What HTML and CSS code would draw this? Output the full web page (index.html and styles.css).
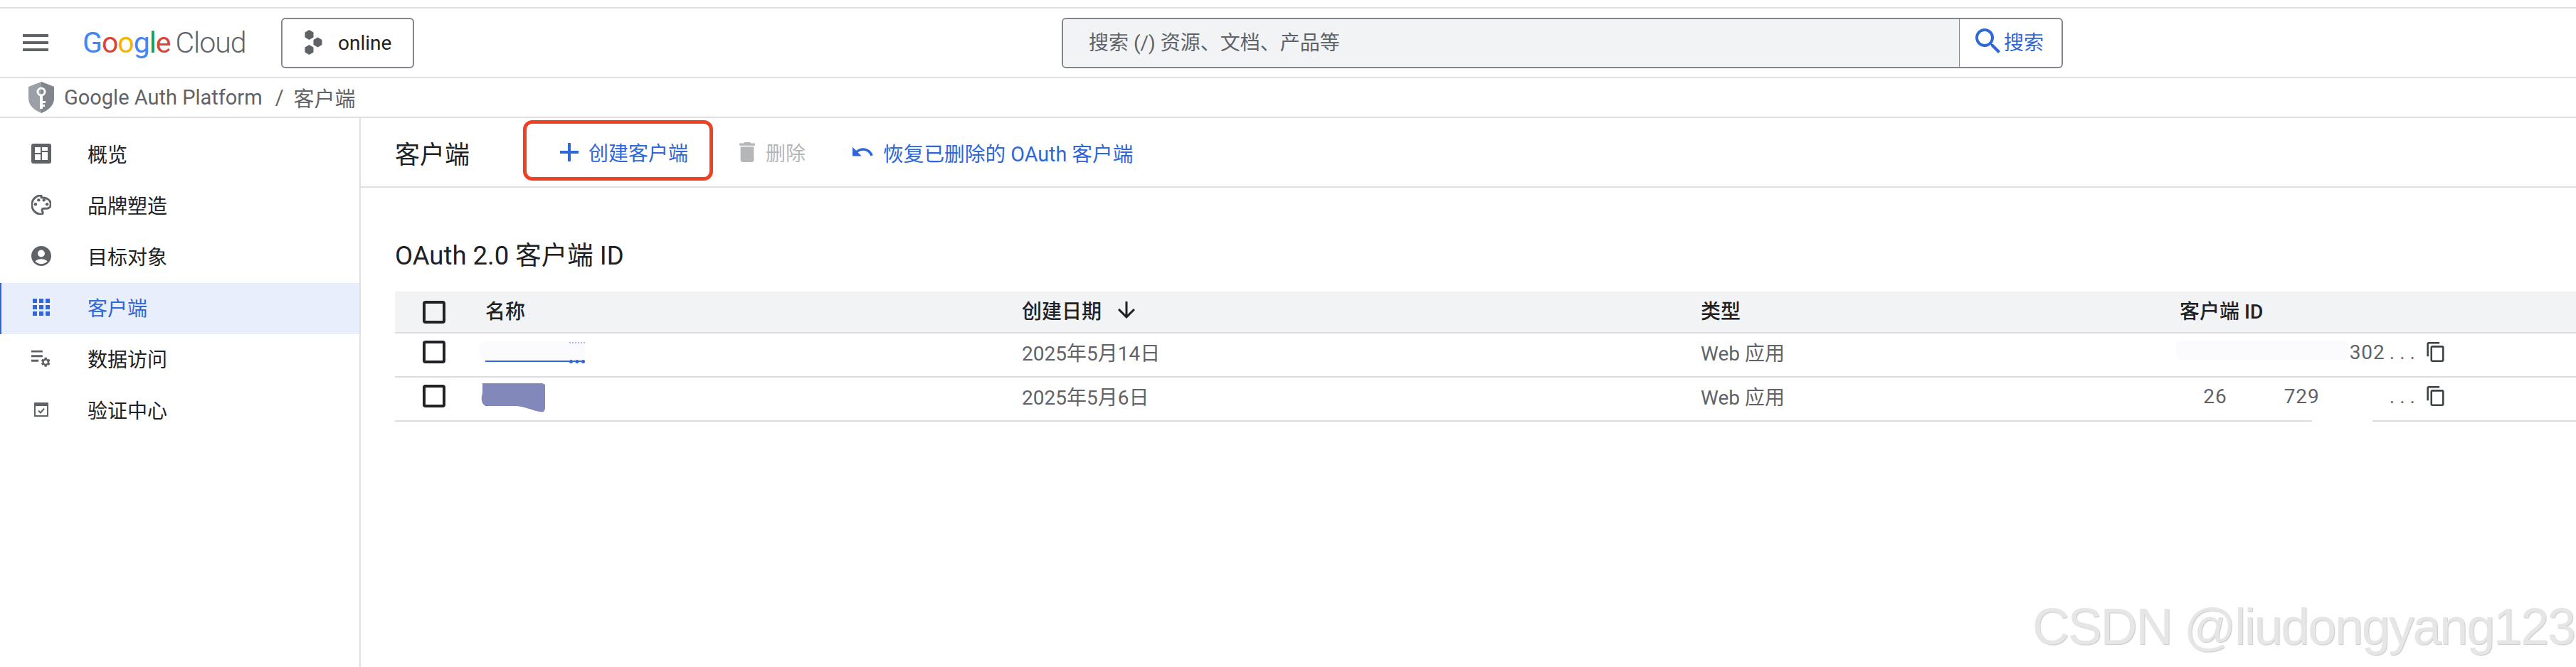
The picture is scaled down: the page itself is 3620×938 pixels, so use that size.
FILE: index.html
```html
<!DOCTYPE html>
<html lang="zh-CN">

<head>
  <meta charset="UTF-8">
  <title>客户端 - Google Auth Platform</title>
  <link rel="stylesheet" href="styles.css">
</head>

<body>
  <div class="top-strip"></div>

  <header class="topbar">
    <div class="hamburger"><span></span><span></span><span></span></div>
    <div class="logo">
      <span class="blue">G</span><span class="red">o</span><span class="yellow">o</span><span class="blue">g</span><span class="green">l</span><span class="red">e</span>
      <span class="cloud">Cloud</span>
    </div>
    <button class="project-btn">
      <svg class="project-icon" viewBox="0 0 25 36">
        <polygon points="7,0 13,3.500 13,10.500 7,14 1,10.500 1,3.500" />
        <polygon points="19,10.500 25,14 25,21 19,24.500 13,21 13,14" />
        <polygon points="7,21 13,24.500 13,31.500 7,35 1,31.500 1,24.500" />
      </svg>
      online
    </button>
    <div class="search">
      <div class="search-input">搜索 (/) 资源、文档、产品等</div>
      <div class="search-btn">
        <svg viewBox="3 3 18 18">
          <path d="M15.500 14h-.79l-.28-.27C15.410 12.590 16 11.110 16 9.500 16 5.910 13.090 3 9.500 3S3 5.910 3 9.500 5.910 16 9.500 16c1.610 0 3.090-.59 4.230-1.570l.27.28v.79l5 4.990L20.490 19l-4.990-5zm-6 0C7.010 14 5 11.990 5 9.500S7.010 5 9.500 5 14 7.010 14 9.500 11.990 14 9.500 14z" />
        </svg>
        搜索
      </div>
    </div>
  </header>

  <div class="breadcrumb">
    <svg class="shield" viewBox="0 0 36 44">
      <path class="shield-body" d="M18 0l18 7v16c0 10-8 17-18 21C8 40 0 33 0 23V7z" />
      <path class="shield-shade" d="M18 0l18 7v16c0 10-8 17-18 21z" />
      <circle class="shield-key" cx="18" cy="14" r="5" />
      <path class="shield-key-stem" d="M16 18h4v20h-4zM20 27h4v3h-4zM20 32h3v3h-3z" />
    </svg>
    <span>Google Auth Platform</span>
    <span class="crumb-sep">/</span>
    <span>客户端</span>
  </div>

  <div class="main">
    <nav class="sidebar">
      <a class="nav-item">
        <svg class="nav-icon" viewBox="0 0 28 28">
          <rect x="0" y="0" width="28" height="28" rx="3" />
          <path class="cut" d="M5 5h8v8H5zM15 5h8v5h-8zM5 15h8v8H5zM15 12h8v11h-8z" />
        </svg>
        概览
      </a>
      <a class="nav-item">
        <svg class="nav-icon" viewBox="2.500 2.500 19 19">
          <path class="line" d="M12 3C7 3 3 7 3 12s4 9 9 9c1 0 1.500-.7 1.500-1.500 0-1-.8-1.300-.8-2.300 0-1 .8-1.700 1.800-1.700H17c2.500 0 4-1.800 4-4 0-4.200-4-6.500-9-6.500z" />
          <circle cx="6.500" cy="11.500" r="1.500" />
          <circle cx="9.500" cy="7.500" r="1.500" />
          <circle cx="14.500" cy="7.500" r="1.500" />
          <circle cx="17.500" cy="11.500" r="1.500" />
        </svg>
        品牌塑造
      </a>
      <a class="nav-item">
        <svg class="nav-icon" viewBox="2 2 20 20">
          <path d="M12 2C6.480 2 2 6.480 2 12s4.480 10 10 10 10-4.480 10-10S17.520 2 12 2zm0 4c1.930 0 3.500 1.570 3.500 3.500S13.930 13 12 13s-3.500-1.570-3.500-3.500S10.070 6 12 6zm0 14c-2.030 0-4.430-.82-6.140-2.880C7.550 15.800 9.680 15 12 15s4.450.8 6.140 2.120C16.430 19.180 14.030 20 12 20z" />
        </svg>
        目标对象
      </a>
      <a class="nav-item active">
        <svg class="nav-icon" viewBox="0 0 28 28">
          <path d="M2 2h6v6H2zM11 2h6v6h-6zM20 2h6v6h-6zM2 11h6v6H2zM11 11h6v6h-6zM20 11h6v6h-6zM2 20h6v6H2zM11 20h6v6h-6zM20 20h6v6h-6z" />
        </svg>
        客户端
      </a>
      <a class="nav-item">
        <svg class="nav-icon" viewBox="0 0 30 30">
          <path d="M0 3h17v3H0zM0 10h17v3H0zM0 17h11v3H0z" />
          <g transform="translate(13 12) scale(.72)">
            <path d="M19.140 12.940c.04-.3.06-.61.06-.94 0-.32-.02-.64-.07-.94l2.030-1.580c.18-.14.23-.41.12-.61l-1.920-3.320c-.12-.22-.37-.29-.59-.22l-2.390.96c-.5-.38-1.030-.7-1.620-.94l-.36-2.540c-.04-.24-.24-.41-.48-.41h-3.840c-.24 0-.43.17-.47.41l-.36 2.540c-.59.24-1.130.57-1.620.94l-2.390-.96c-.22-.08-.47 0-.59.22L2.740 8.870c-.12.21-.08.47.12.61l2.030 1.580c-.05.3-.09.63-.09.94s.02.64.07.94l-2.030 1.580c-.18.14-.23.41-.12.61l1.920 3.320c.12.22.37.29.59.22l2.390-.96c.5.38 1.030.7 1.620.94l.36 2.540c.05.24.24.41.48.41h3.840c.24 0 .44-.17.47-.41l.36-2.540c.59-.24 1.130-.56 1.620-.94l2.390.96c.22.08.47 0 .59-.22l1.920-3.320c.12-.22.07-.47-.12-.61l-2.010-1.580zM12 15.600c-1.980 0-3.600-1.620-3.600-3.600s1.620-3.600 3.600-3.600 3.600 1.620 3.600 3.600-1.620 3.600-3.600 3.600z" />
          </g>
        </svg>
        数据访问
      </a>
      <a class="nav-item">
        <svg class="nav-icon" viewBox="0 0 28 28">
          <path d="M5 4h18a1 1 0 0 1 1 1v18a1 1 0 0 1-1 1H5a1 1 0 0 1-1-1V5a1 1 0 0 1 1-1zm1 5v13h16V9z" />
          <path class="line" d="M10 15.500l3 3 5-6" />
        </svg>
        验证中心
      </a>
    </nav>

    <section class="content">
      <div class="toolbar">
        <h1>客户端</h1>
        <button class="tool-btn create">
          <svg viewBox="0 0 26 26"><path d="M11 0h4v11h11v4H15v11h-4V15H0v-4h11z" /></svg>
          创建客户端
        </button>
        <button class="tool-btn disabled">
          <svg viewBox="5 3 14 18"><path d="M6 19c0 1.100.9 2 2 2h8c1.100 0 2-.9 2-2V7H6v12zM19 4h-3.500l-1-1h-5l-1 1H5v2h14V4z" /></svg>
          删除
        </button>
        <button class="tool-btn restore">
          <svg viewBox="2 7 22 11"><path d="M12.500 8c-2.650 0-5.050.99-6.900 2.600L2 7v9h9l-3.620-3.620c1.390-1.160 3.160-1.880 5.120-1.880 3.540 0 6.550 2.310 7.600 5.500l2.370-.78C21.080 11.030 17.150 8 12.500 8z" /></svg>
          恢复已删除的 OAuth 客户端
        </button>
      </div>

      <h2>OAuth 2.0 客户端 ID</h2>

      <table class="clients">
        <colgroup>
          <col class="col-check">
          <col class="col-name">
          <col class="col-date">
          <col class="col-type">
          <col class="col-id">
        </colgroup>
        <thead>
          <tr>
            <th><span class="checkbox"></span></th>
            <th>名称</th>
            <th>
              <span class="sort-head">创建日期
                <svg viewBox="4 4 16 16"><path d="M20 12l-1.410-1.410L13 16.170V4h-2v12.170l-5.580-5.590L4 12l8 8 8-8z" /></svg>
              </span>
            </th>
            <th>类型</th>
            <th>客户端 ID</th>
          </tr>
        </thead>
        <tbody>
          <tr>
            <td><span class="checkbox"></span></td>
            <td>
              <a class="client-link wide"></a>
              <!-- 打码区域 -->
              <span class="mask-name"></span>
              <span class="mask-dots"></span>
            </td>
            <td>2025年5月14日</td>
            <td>Web 应用</td>
            <td>
              <span class="mask-id"></span>
              <div class="id-cell">
                <span class="id-text">302<span class="dots">...</span></span>
                <svg class="copy" viewBox="2 1 19 22"><path d="M16 1H4c-1.100 0-2 .9-2 2v14h2V3h12V1zm3 4H8c-1.100 0-2 .9-2 2v14c0 1.100.9 2 2 2h11c1.100 0 2-.9 2-2V7c0-1.100-.9-2-2-2zm0 16H8V7h11v14z" /></svg>
              </div>
            </td>
          </tr>
          <tr>
            <td><span class="checkbox"></span></td>
            <td>
              <a class="client-link narrow"></a>
              <svg class="smear" viewBox="0 0 92 42">
                <path d="M3 0h84l4 2v34l-2 4c-8 2-20-6-38-8H10C2 32 0 22 3 14z" />
              </svg>
            </td>
            <td>2025年5月6日</td>
            <td>Web 应用</td>
            <td>
              <span class="mask-line"></span>
              <div class="id-cell">
                <span class="id-text id-split">26<span class="gap-a"></span>729<span class="gap-b"></span><span class="dots">...</span></span>
                <svg class="copy" viewBox="2 1 19 22"><path d="M16 1H4c-1.100 0-2 .9-2 2v14h2V3h12V1zm3 4H8c-1.100 0-2 .9-2 2v14c0 1.100.9 2 2 2h11c1.100 0 2-.9 2-2V7c0-1.100-.9-2-2-2zm0 16H8V7h11v14z" /></svg>
              </div>
            </td>
          </tr>
        </tbody>
      </table>
    </section>
  </div>

  <div class="watermark">CSDN @liudongyang123</div>
</body>

</html>
```

FILE: styles.css
```css
* {
  margin: 0;
  padding: 0;
  box-sizing: border-box;
}

html,
body {
  height: 938px;
  overflow: hidden;
}

body {
  position: relative;
  font-family: 'Roboto', 'Noto Sans CJK SC', sans-serif;
  font-size: 28px;
  color: #202124;
  background: #fff;
}

.top-strip {
  height: 12px;
  border-bottom: 2px solid #dfdfe4;
}

.topbar {
  display: flex;
  align-items: center;
  height: 98px;
  padding-left: 32px;
  border-bottom: 2px solid #dfdfe4;
}

.hamburger {
  display: flex;
  flex-direction: column;
  justify-content: space-between;
  width: 36px;
  height: 24px;
}

.hamburger span {
  height: 4px;
  background: #5f6368;
}

.logo {
  display: flex;
  margin-left: 48px;
  width: 279px;
  font-size: 41px;
  letter-spacing: -1px;
}

.logo .cloud {
  margin-left: 7px;
  font-weight: 300;
  color: #5f6368;
}

.blue { color: #4285f4; }
.red { color: #db4437; }
.yellow { color: #f4b400; }
.green { color: #0f9d58; }

.project-btn {
  display: flex;
  align-items: center;
  width: 187px;
  height: 71px;
  padding-left: 30px;
  font: inherit;
  color: #202124;
  background: #fff;
  border: 2px solid #80868b;
  border-radius: 6px;
}

.project-icon {
  width: 26px;
  height: 36px;
  margin-right: 22px;
  fill: #5f6368;
}

.search {
  display: flex;
  height: 71px;
  width: 1407px;
  margin-left: 910px;
  border: 2px solid #80868b;
  border-radius: 6px;
  overflow: hidden;
}

.search-input {
  display: flex;
  align-items: center;
  flex: 1;
  padding-left: 36px;
  padding-bottom: 4px;
  color: #5f6368;
  background: #f1f3f4;
  border-right: 1px solid #80868b;
}

.search-btn {
  display: flex;
  align-items: center;
  width: 143px;
  padding-left: 22px;
  padding-bottom: 4px;
  color: #2f66d8;
}

.search-btn svg {
  width: 36px;
  height: 36px;
  margin-right: 4px;
  fill: #2f66d8;
}

.breadcrumb {
  display: flex;
  align-items: center;
  height: 56px;
  padding-left: 40px;
  font-size: 29px;
  color: #5f6368;
  border-bottom: 2px solid #dfdfe4;
}

.shield {
  width: 36px;
  height: 44px;
  margin-right: 14px;
}

.shield-body { fill: #9aa0a6; }
.shield-shade { fill: #80868b; }
.shield-key { fill: none; stroke: #fff; stroke-width: 3; }
.shield-key-stem { fill: #fff; }

.crumb-sep {
  margin: 0 14px 0 18px;
}

.main {
  display: flex;
  height: 772px;
}

.sidebar {
  flex: none;
  width: 507px;
  padding-top: 16px;
  border-right: 2px solid #dfdfe4;
}

.nav-item {
  display: flex;
  align-items: center;
  height: 72px;
  padding-left: 44px;
  padding-bottom: 4px;
}

.nav-icon {
  flex: none;
  width: 28px;
  height: 28px;
  margin-right: 51px;
  fill: #5f6368;
}

.nav-icon .cut { fill: #fff; }
.nav-icon .line { fill: none; stroke: #5f6368; stroke-width: 2; }

.nav-item.active {
  color: #2f66d8;
  background: #e8eefb;
  border-left: 2px solid #2f66d8;
  padding-left: 42px;
}

.nav-item.active .nav-icon {
  fill: #2f66d8;
}

.content {
  flex: 1;
  min-width: 0;
}

.toolbar {
  display: flex;
  align-items: center;
  height: 98px;
  padding-left: 48px;
  border-bottom: 2px solid #dfdfe4;
}

.toolbar h1 {
  width: 180px;
  font-size: 35px;
  font-weight: 400;
}

.tool-btn {
  display: flex;
  align-items: center;
  height: 85px;
  font: inherit;
  color: #2f66d8;
  background: none;
  border: none;
}

.tool-btn svg {
  fill: #2f66d8;
}

.create {
  width: 267px;
  margin-bottom: 6px;
  padding-left: 47px;
  padding-top: 5px;
  border: 5px solid #ee4023;
  border-radius: 13px;
}

.create svg {
  width: 26px;
  height: 26px;
  margin-right: 14px;
}

.disabled {
  margin-left: 36px;
  color: #b5b6b8;
}

.disabled svg {
  width: 24px;
  height: 28px;
  margin-right: 14px;
  fill: #b5b6b8;
}

.restore {
  margin-left: 66px;
  font-size: 28.700px;
}

.restore svg {
  width: 31px;
  height: 17px;
  margin-right: 12px;
}

.content h2 {
  margin: 76px 0 0 48px;
  height: 70px;
  font-size: 36.500px;
  line-height: 40px;
  font-weight: 400;
}

.clients {
  width: 3113px;
  margin-left: 48px;
  border-collapse: collapse;
  table-layout: fixed;
}

.col-check { width: 127px; }
.col-name { width: 754px; }
.col-date { width: 954px; }
.col-type { width: 673px; }
.col-id { width: 605px; }

.clients th {
  height: 58px;
  padding-bottom: 6px;
  font-weight: 500;
  text-align: left;
  background: #f1f3f4;
  border-bottom: 2px solid #dadce0;
}

.clients th:first-child {
  padding-bottom: 0;
}

.clients td {
  position: relative;
  height: 62px;
  padding-bottom: 8px;
  color: #5f6368;
  border-bottom: 2px solid #dadce0;
}

.checkbox {
  display: block;
  width: 32px;
  height: 32px;
  margin-left: 39px;
  border: 4px solid #202124;
  border-radius: 4px;
}

.sort-head {
  display: flex;
  align-items: center;
}

.sort-head svg {
  width: 24px;
  height: 24px;
  margin-left: 23px;
  fill: #202124;
}

.client-link {
  display: block;
  height: 34px;
  margin-bottom: 6px;
  border-bottom: 2px solid #2f66d8;
}

.client-link.wide { width: 140px; }
.client-link.narrow { width: 60px; }

.mask-name {
  position: absolute;
  left: -8px;
  top: 11px;
  width: 148px;
  height: 26px;
  background: #fbfbfe;
  border-radius: 6px;
}

.mask-dots {
  position: absolute;
  left: 118px;
  top: 12px;
  width: 22px;
  height: 30px;
  border-top: 2px dotted #a9c0ee;
  border-bottom: 5px dotted #2f66d8;
}

.smear {
  position: absolute;
  left: -7px;
  top: 8px;
  width: 92px;
  height: 42px;
  fill: #8288ba;
}

.mask-id {
  position: absolute;
  left: -5px;
  top: 10px;
  width: 242px;
  height: 27px;
  background: #fbfbfe;
  border-radius: 6px;
}

.mask-line {
  position: absolute;
  left: 186px;
  bottom: -2px;
  width: 85px;
  height: 4px;
  background: #fff;
}

.id-cell {
  position: relative;
  display: flex;
  align-items: center;
  justify-content: flex-end;
  width: 372px;
}

.id-text {
  display: flex;
  margin-right: 9px;
  letter-spacing: 1px;
}

.dots {
  margin-left: 6px;
  letter-spacing: 7px;
}

.gap-a { width: 80px; }
.gap-b { width: 92px; }

.copy {
  flex: none;
  width: 25px;
  height: 28px;
  fill: #3c4043;
}

.watermark {
  position: absolute;
  left: 2856px;
  top: 840px;
  font-family: 'Liberation Sans', sans-serif;
  font-size: 72px;
  letter-spacing: -2.200px;
  white-space: nowrap;
  color: #e6e6e6;
  text-shadow: 1px 1px 1px #c9c9c9;
}
```
